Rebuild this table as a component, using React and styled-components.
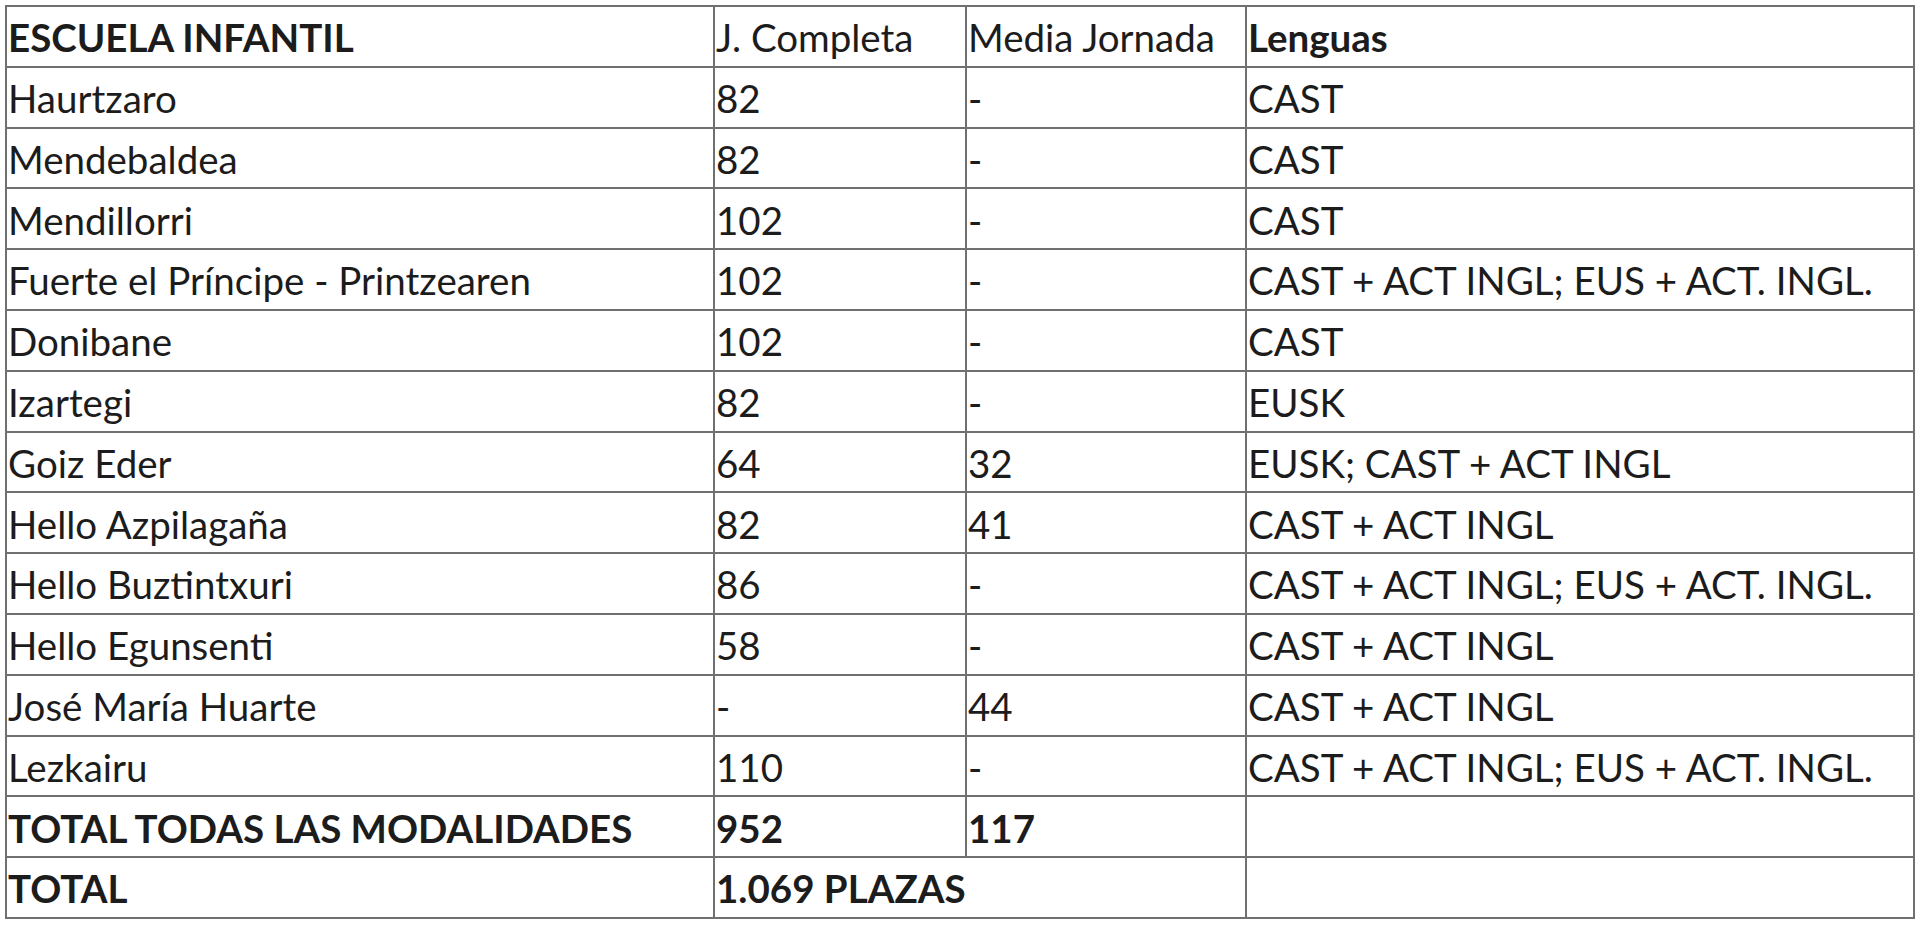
import React from "react";
import styled, { createGlobalStyle } from "styled-components";

const rows = [
  { name: "Haurtzaro", full: "82", half: "-", lang: "CAST" },
  { name: "Mendebaldea", full: "82", half: "-", lang: "CAST" },
  { name: "Mendillorri", full: "102", half: "-", lang: "CAST" },
  {
    name: "Fuerte el Príncipe - Printzearen",
    full: "102",
    half: "-",
    lang: "CAST + ACT INGL; EUS + ACT. INGL."
  },
  { name: "Donibane", full: "102", half: "-", lang: "CAST" },
  { name: "Izartegi", full: "82", half: "-", lang: "EUSK" },
  { name: "Goiz Eder", full: "64", half: "32", lang: "EUSK; CAST + ACT INGL" },
  { name: "Hello Azpilagaña", full: "82", half: "41", lang: "CAST + ACT INGL" },
  {
    name: "Hello Buztintxuri",
    full: "86",
    half: "-",
    lang: "CAST + ACT INGL; EUS + ACT. INGL."
  },
  { name: "Hello Egunsenti", full: "58", half: "-", lang: "CAST + ACT INGL" },
  { name: "José María Huarte", full: "-", half: "44", lang: "CAST + ACT INGL" },
  {
    name: "Lezkairu",
    full: "110",
    half: "-",
    lang: "CAST + ACT INGL; EUS + ACT. INGL."
  }
];

const GlobalStyle = createGlobalStyle`
  html, body {
    margin: 0;
    padding: 0;
    background: #fff;
  }
  body {
    font-family: Lato, "Open Sans", sans-serif;
    color: #1f1f1f;
  }
`;

const Page = styled.div`
  padding: 5px 7px 0 5px;
`;

const Table = styled.table`
  width: 1908px;
  border-collapse: collapse;
  table-layout: fixed;
  border: 2px solid #707070;
`;

const Col = styled.col`
  width: ${props => props.w}px;
`;

const Row = styled.tr`
  height: 60.8px;
`;

const Cell = styled.td`
  border: 2px solid #707070;
  padding: 2px 0 0 1px;
  font-size: 38.5px;
  font-weight: ${props => (props.bold ? 700 : 400)};
  white-space: nowrap;
  vertical-align: middle;
  line-height: 1;
  color: #1c1c1c;
`;

const App = () => (
  <Page>
    <GlobalStyle />
    <Table>
      <colgroup>
        <Col w={708} />
        <Col w={252} />
        <Col w={280} />
        <Col w={668} />
      </colgroup>
      <tbody>
        <Row>
          <Cell bold>ESCUELA INFANTIL</Cell>
          <Cell>J. Completa</Cell>
          <Cell>Media Jornada</Cell>
          <Cell bold>Lenguas</Cell>
        </Row>
        {rows.map(r => (
          <Row key={r.name}>
            <Cell>{r.name}</Cell>
            <Cell>{r.full}</Cell>
            <Cell>{r.half}</Cell>
            <Cell>{r.lang}</Cell>
          </Row>
        ))}
        <Row>
          <Cell bold>TOTAL TODAS LAS MODALIDADES</Cell>
          <Cell bold>952</Cell>
          <Cell bold>117</Cell>
          <Cell />
        </Row>
        <Row>
          <Cell bold>TOTAL</Cell>
          <Cell bold colSpan={2}>
            1.069 PLAZAS
          </Cell>
          <Cell />
        </Row>
      </tbody>
    </Table>
  </Page>
);

export default App;
